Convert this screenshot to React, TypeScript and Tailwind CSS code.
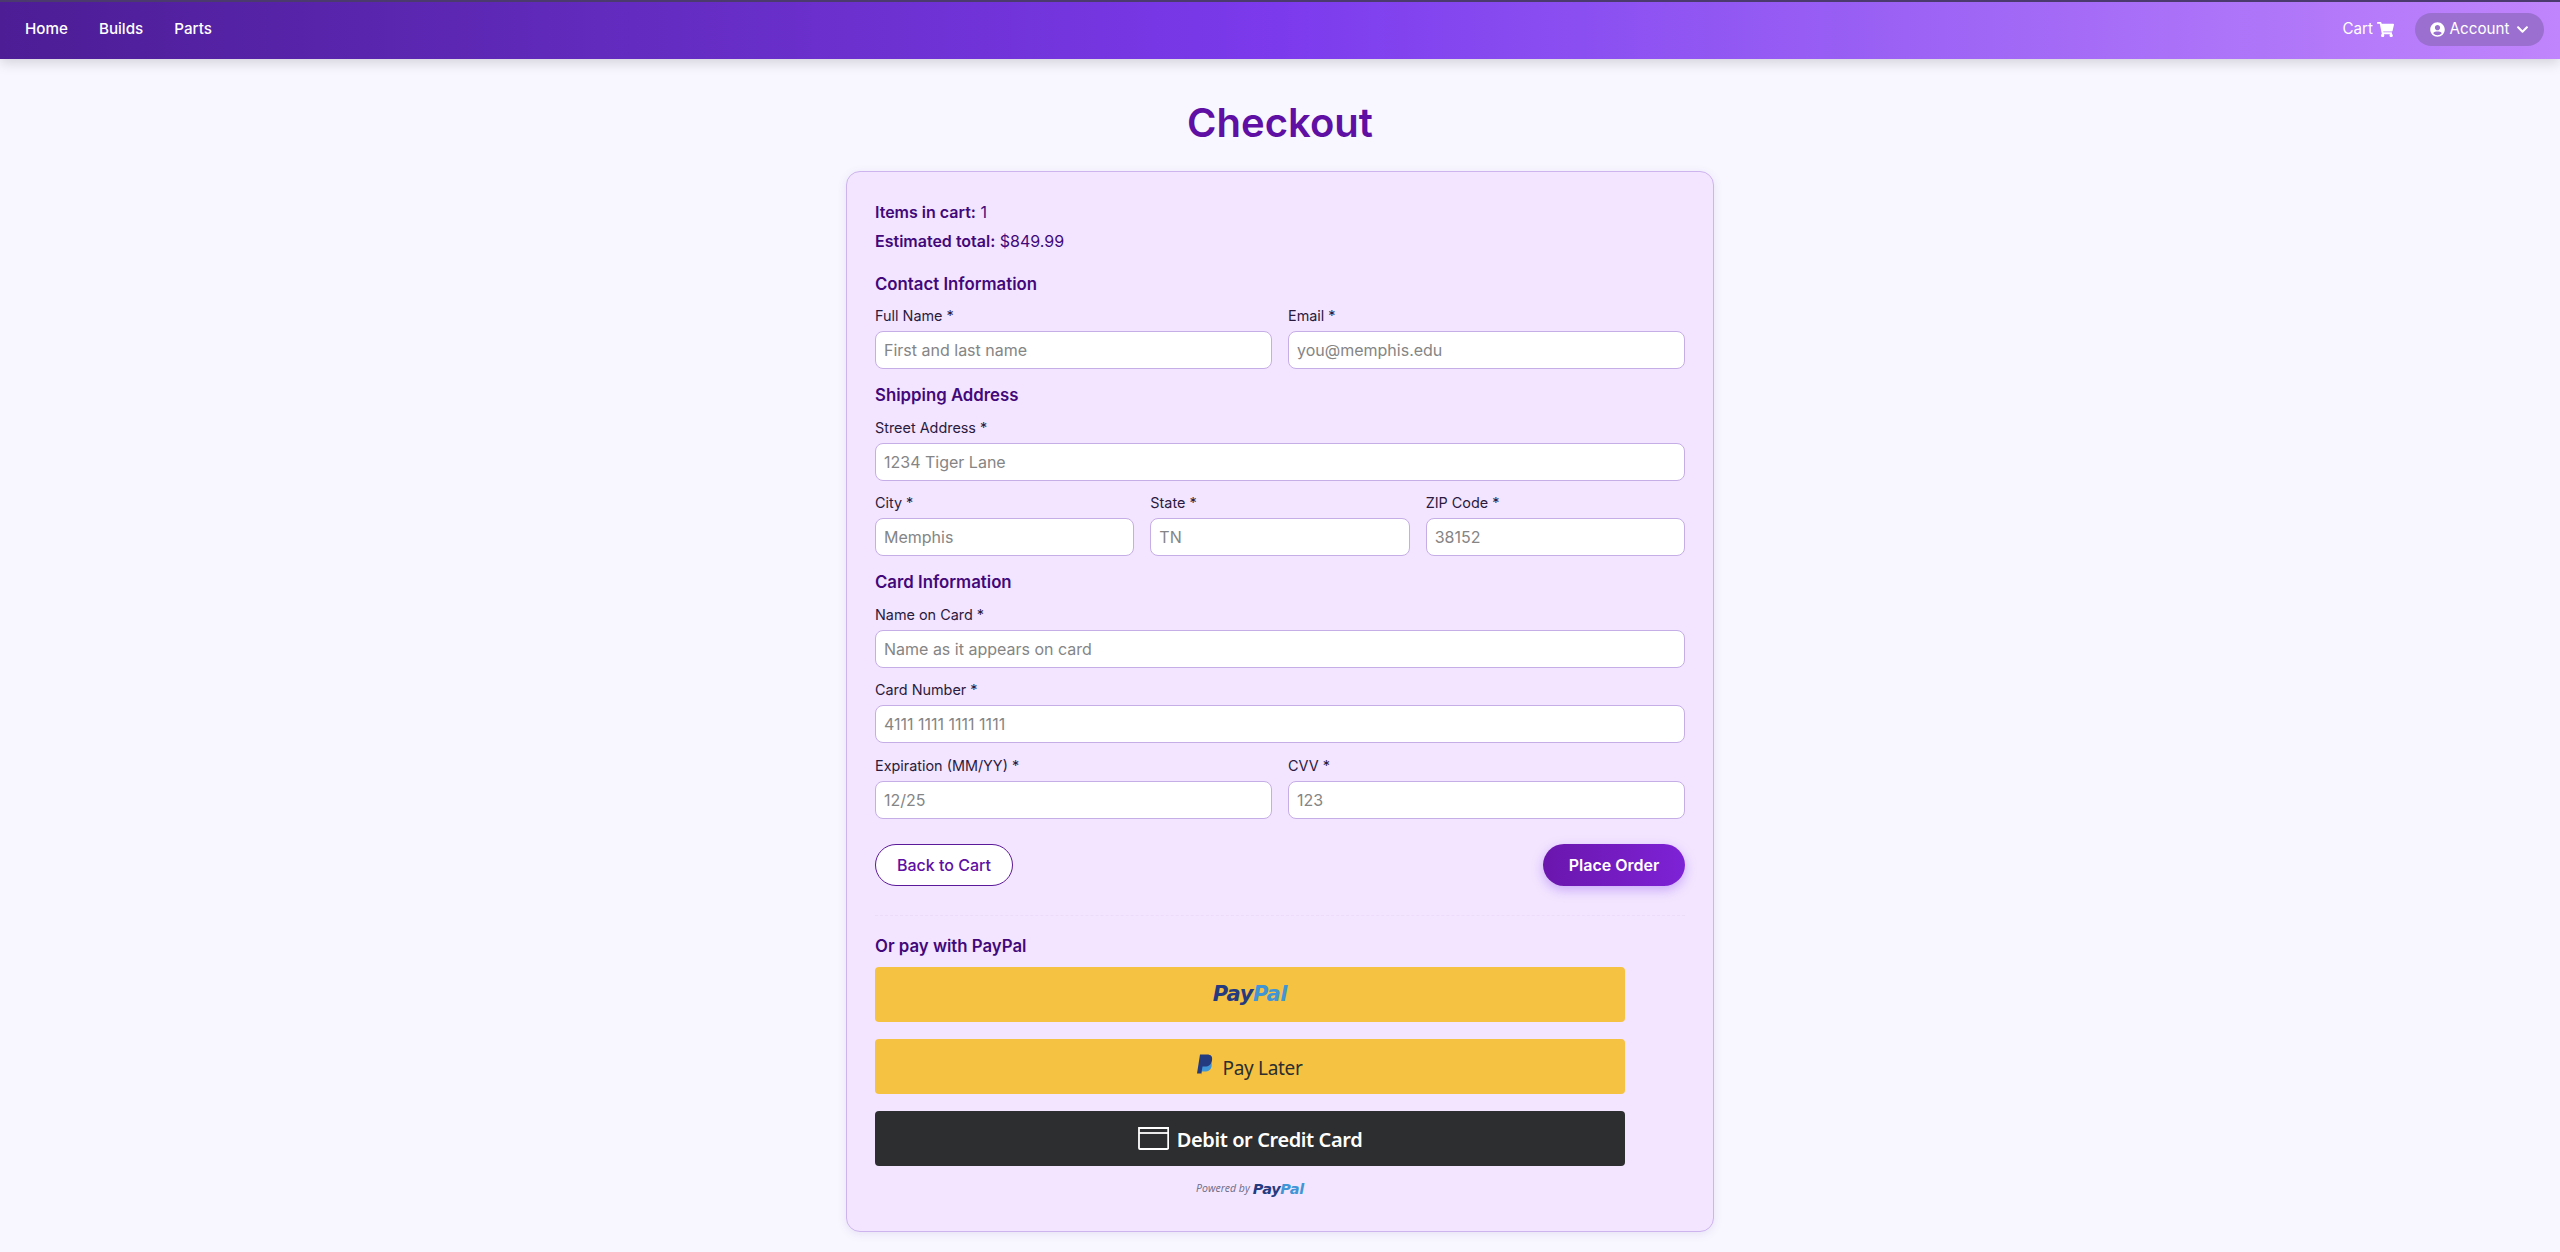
import { FaChevronDown, FaShoppingCart, FaUserCircle } from "react-icons/fa";

const inter = "font-['Inter',sans-serif]";

type FieldProps = {
  label: string;
  placeholder: string;
};

function Field({ label, placeholder }: FieldProps) {
  return (
    <div className="min-w-0 flex-1">
      <label className="mb-[5px] block text-[14.4px] leading-5 text-[#2a1a3e]">{label}</label>
      <input
        placeholder={placeholder}
        className="block h-[38px] w-full rounded-[8px] border border-[#c5ade6] bg-white px-2 text-[16px] text-[#2a1a3e] outline-none placeholder:text-[#858585]"
      />
    </div>
  );
}

function SectionTitle({ children }: { children: React.ReactNode }) {
  return <h3 className="mb-[10.5px] mt-[14px] text-[16.8px] font-semibold leading-6 text-[#42087a]">{children}</h3>;
}

function PayPalMark({ className }: { className: string }) {
  return (
    <span className={`font-['DejaVu_Sans',sans-serif] font-bold italic ${className}`}>
      <span className="text-[#253b80]">Pay</span>
      <span className="text-[#3f95d6]">Pal</span>
    </span>
  );
}

export default function App() {
  return (
    <div className={`${inter} min-h-screen bg-[#f8f7ff]`}>
      <nav className="flex h-[59px] items-center justify-between border-t-2 border-[#4b3a6e] bg-gradient-to-r from-[#4c1d95] via-[#7c3aed] to-[#c084fc] pb-[2px] pl-[25px] pr-[16px] shadow-[0_4px_12px_rgba(0,0,0,0.15)]">
        <div className="flex gap-[31px] text-[15.2px] font-medium text-white">
          <a>Home</a>
          <a>Builds</a>
          <a>Parts</a>
        </div>
        <div className="flex items-center gap-[21px] text-[15.2px] text-white">
          <a className="flex items-center gap-[4px]">
            Cart <FaShoppingCart className="text-[17px]" />
          </a>
          <button className="flex h-[33px] w-[129px] items-center justify-center gap-[5px] rounded-full bg-[#9a6fd0]">
            <FaUserCircle className="text-[15px]" />
            Account
            <FaChevronDown className="ml-[2px] text-[13px]" />
          </button>
        </div>
      </nav>

      <main className="flex flex-col items-center pb-[21px]">
        <h1 className="mt-[42px] text-[40px] font-semibold leading-[44px] text-[#5f0fa3]">Checkout</h1>
        <div className="mt-[26px] w-[868px] rounded-[14px] border border-[#cdb4ee] bg-[#f3e5ff] px-[28px] pb-[32px] pt-[26px] shadow-[0_2px_10px_rgba(90,40,160,0.1)]">
          <p className="text-[16px] leading-[29px] text-[#42087a]">
            <strong className="font-semibold">Items in cart:</strong> 1
          </p>
          <p className="mb-[15.5px] text-[16px] leading-[29px] text-[#42087a]">
            <strong className="font-semibold">Estimated total:</strong> $849.99
          </p>

          <h3 className="mb-[10.5px] text-[16.8px] font-semibold leading-6 text-[#42087a]">Contact Information</h3>
          <div className="flex gap-4">
            <Field label="Full Name *" placeholder="First and last name" />
            <Field label="Email *" placeholder="you@memphis.edu" />
          </div>

          <SectionTitle>Shipping Address</SectionTitle>
          <div className="flex flex-col gap-[12.5px]">
            <Field label="Street Address *" placeholder="1234 Tiger Lane" />
            <div className="flex gap-4">
              <Field label="City *" placeholder="Memphis" />
              <Field label="State *" placeholder="TN" />
              <Field label="ZIP Code *" placeholder="38152" />
            </div>
          </div>

          <SectionTitle>Card Information</SectionTitle>
          <div className="flex flex-col gap-[12.5px]">
            <Field label="Name on Card *" placeholder="Name as it appears on card" />
            <Field label="Card Number *" placeholder="4111 1111 1111 1111" />
            <div className="flex gap-4">
              <Field label="Expiration (MM/YY) *" placeholder="12/25" />
              <Field label="CVV *" placeholder="123" />
            </div>
          </div>

          <div className="mt-[25.5px] flex items-center justify-between">
            <button className="h-[42px] w-[138px] rounded-full border border-[#5b1a99] bg-white text-[16px] font-medium text-[#5f0fa3]">
              Back to Cart
            </button>
            <button className="h-[42px] w-[142px] rounded-full bg-gradient-to-r from-[#6a16ad] to-[#7e22d6] text-[16px] font-semibold text-white shadow-[0_4px_12px_rgba(124,58,237,0.35)]">
              Place Order
            </button>
          </div>

          <div className="mt-[29px] border-t border-dashed border-[#ecdcfa]" />

          <h3 className="mt-[18px] text-[16.8px] font-semibold leading-6 text-[#42087a]">Or pay with PayPal</h3>

          <div className="mt-[9px] flex w-[750px] flex-col gap-[17px]">
            <button className="flex h-[55px] items-center justify-center rounded-[4px] bg-[#f6c241]">
              <PayPalMark className="text-[21px] tracking-[-0.4px]" />
            </button>
            <button className="flex h-[55px] items-center justify-center gap-[7px] rounded-[4px] bg-[#f6c241] font-['Noto_Sans',sans-serif] text-[19px] tracking-[-0.3px] text-[#2c2e2f]">
              <svg className="mb-[2px]" width="18" height="23" viewBox="0 0 18 22">
                <path d="M4 21l.7-4h3c4 0 6.500-2 7-6 .3-2-.3-3.300-1.500-4L4 9z" fill="#3f95d6" />
                <path d="M3 0h7c4 0 5.800 2 5 6-.7 4-3.300 6-7 6H5.500L4.300 19H0z" fill="#253b80" />
              </svg>
              <span className="pt-[3px]">Pay Later</span>
            </button>
            <button className="flex h-[55px] items-center justify-center gap-[8px] rounded-[4px] bg-[#2c2e2f] font-['Noto_Sans',sans-serif] text-[20px] font-semibold tracking-[-0.4px] text-white">
              <svg width="31" height="23" viewBox="0 0 31 23" fill="none" stroke="white" strokeWidth="1.800">
                <path d="M1 1h29.200v20a1 1 0 0 1-1 1H2a1 1 0 0 1-1-1z" />
                <path d="M1 6h29" />
              </svg>
              <span className="pt-[2px]">Debit or Credit Card</span>
            </button>
          </div>

          <div className="mt-[13px] flex w-[750px] items-center justify-center gap-[3px]">
            <span className="font-['Open_Sans',sans-serif] text-[10.5px] italic text-[#6b6b85]">Powered by</span>
            <PayPalMark className="text-[14.5px] leading-5 tracking-[-0.3px]" />
          </div>
        </div>
      </main>
    </div>
  );
}
